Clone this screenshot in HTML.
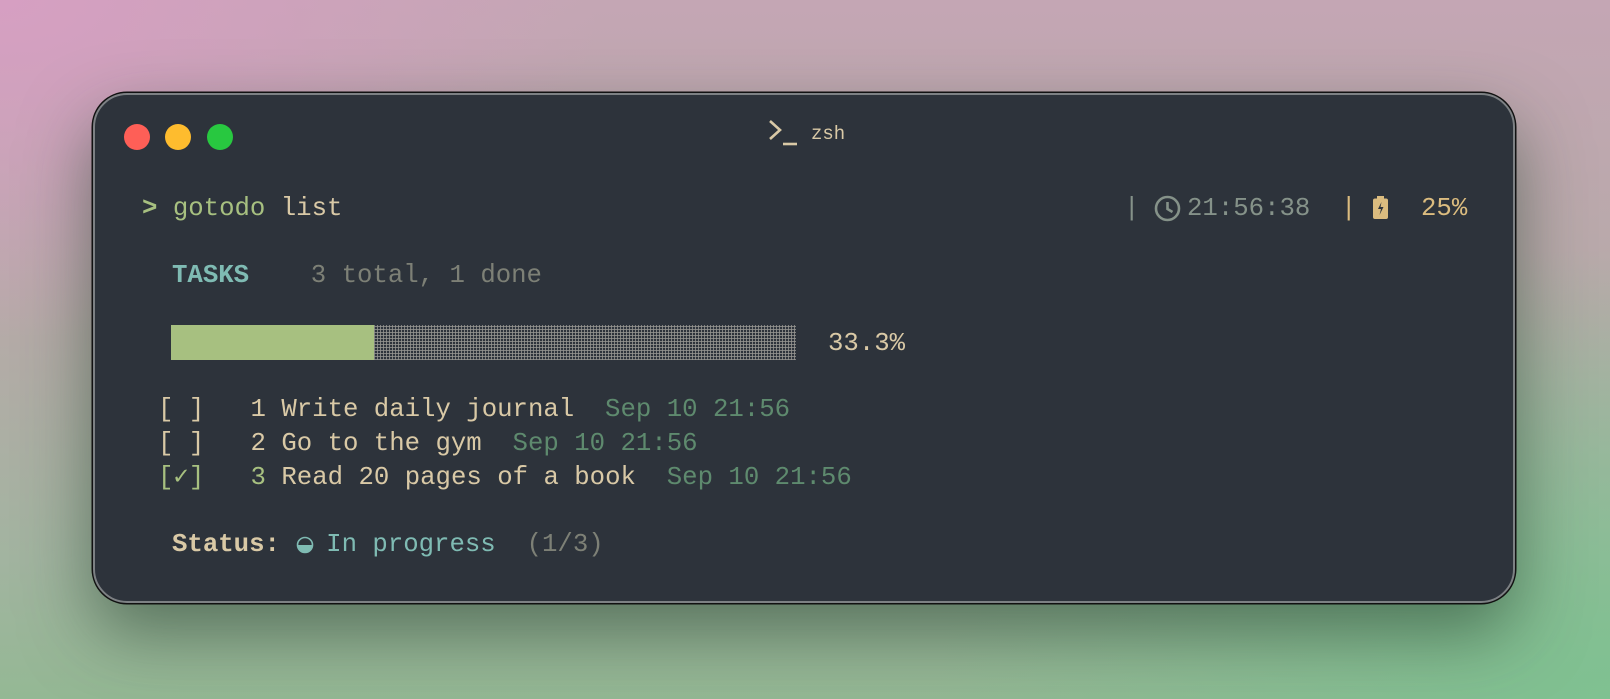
<!DOCTYPE html>
<html><head><meta charset="utf-8"><style>
html,body{margin:0;padding:0;width:1610px;height:699px;overflow:hidden}
body{position:relative;background:
radial-gradient(ellipse 800px 450px at 0% 0%, #d69fc2 0%, rgba(214,159,194,0) 75%),
radial-gradient(ellipse 900px 600px at 100% 100%, #7fc191 0%, rgba(127,193,145,0) 75%),
linear-gradient(180deg,#c4a6b4 0%,#b6aaa8 45%,#a2b4a0 80%,#94b894 100%);
font-family:"Liberation Mono","DejaVu Sans Mono",monospace;}
.win{position:absolute;left:93px;top:93px;width:1422px;height:510px;box-sizing:border-box;background:#2d333b;border-radius:34px;border:2px solid #7d8184;box-shadow:0 0 0 1.5px #111,0 30px 70px rgba(30,60,40,0.55)}
.dot{position:absolute;width:26px;height:26px;border-radius:50%;top:124px}
.t{position:absolute;white-space:pre;font-size:25.7px;line-height:30px;color:#d9c9a6}
.g{color:#a7c080}.c{color:#d9c9a6}.teal{color:#7fbbb3}.gr{color:#7d8076}.d{color:#5e8a6e}.y{color:#dbbc7f}.cl{color:#859289}
b{font-weight:bold}
</style></head><body>
<div class="win"></div>
<div class="dot" style="left:124px;background:#fe5f57"></div>
<div class="dot" style="left:165px;background:#febc2e"></div>
<div class="dot" style="left:207px;background:#28c840"></div>
<svg style="position:absolute;left:768px;top:119px" width="30" height="28" viewBox="0 0 30 28"><path d="M2 2 L12 11 L2 20" stroke="#d9c9a6" stroke-width="2.6" fill="none"/><path d="M15 25 H29" stroke="#d9c9a6" stroke-width="2.6"/></svg>
<div class="t" style="left:811px;top:119px;font-size:19px;color:#d9c9a6">zsh</div>

<div class="t" style="left:142px;top:194px"><span class="g"><b>&gt;</b> gotodo</span> list</div>
<div class="t cl" style="left:1124px;top:194px">|</div>
<svg style="position:absolute;left:1154px;top:195px" width="27" height="27" viewBox="0 0 27 27"><circle cx="13.5" cy="13.5" r="11.5" stroke="#859289" stroke-width="2.6" fill="none"/><path d="M13.5 7 V14 L18.5 17" stroke="#859289" stroke-width="2.6" fill="none"/></svg>
<div class="t cl" style="left:1187px;top:194px">21:56:38</div>
<div class="t y" style="left:1341px;top:194px">|</div>
<svg style="position:absolute;left:1373px;top:196px" width="15" height="23" viewBox="0 0 15 23"><rect x="4" y="0" width="7" height="3" fill="#dbbc7f"/><rect x="0" y="2.5" width="15" height="20.5" rx="2" fill="#dbbc7f"/><path d="M8.5 6 L5 13 H8 L6.5 19 L10.5 11 H7.5 Z" fill="#2d333b"/></svg>
<div class="t y" style="left:1421px;top:194px">25%</div>

<div class="t" style="left:172px;top:261px"><b class="teal">TASKS</b>    <span class="gr">3 total, 1 done</span></div>

<div style="position:absolute;left:171px;top:325px;width:203px;height:35px;background:#a7c080"></div>
<div style="position:absolute;left:374px;top:325px;width:422px;height:35px;background:
repeating-linear-gradient(90deg,rgba(150,150,145,0.8) 0 1px,transparent 1px 3px),
repeating-linear-gradient(0deg,rgba(150,150,145,0.8) 0 1px,transparent 1px 3px);"></div>
<div class="t" style="left:828px;top:329px">33.3%</div>

<div class="t" style="left:158px;top:395px">[ ]   1 Write daily journal  <span class="d">Sep 10 21:56</span></div>
<div class="t" style="left:158px;top:429px">[ ]   2 Go to the gym  <span class="d">Sep 10 21:56</span></div>
<div class="t" style="left:158px;top:463px"><span class="g">[✓]   3</span> Read 20 pages of a book  <span class="d">Sep 10 21:56</span></div>

<div class="t" style="left:172px;top:530px"><b>Status:</b>   <span class="teal">In progress</span>  <span class="gr">(1/3)</span></div>
<svg style="position:absolute;left:296px;top:536px" width="18" height="18" viewBox="0 0 18 18"><circle cx="9" cy="9" r="7.5" fill="none" stroke="#7fbbb3" stroke-width="1.6"/><path d="M1.5 9 A7.5 7.5 0 0 0 16.5 9 Z" fill="#7fbbb3"/></svg>
</body></html>
